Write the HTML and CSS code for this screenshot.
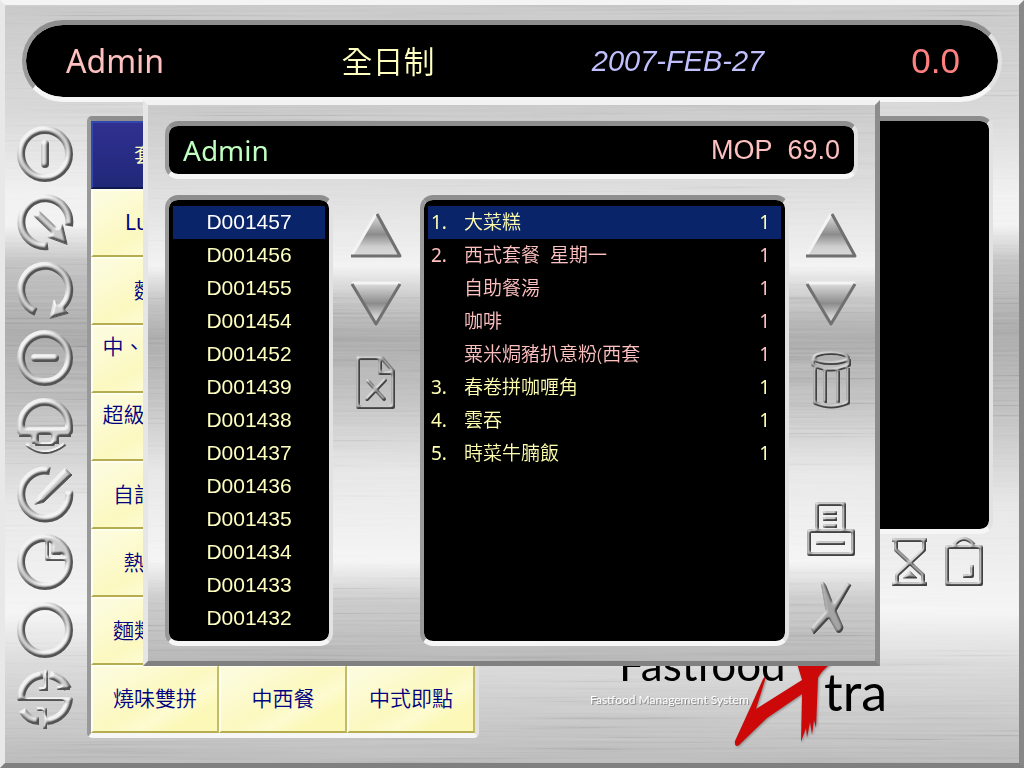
FILE: index.html
```html
<!DOCTYPE html>
<html lang="zh-Hant">
<head>
<meta charset="utf-8">
<title>Fastfood Xtra</title>
<link rel="stylesheet" href="styles.css">
</head>
<body>
<div class="page">
  <svg class="brushed" aria-hidden="true">
    <defs>
      <filter id="grain" x="0" y="0" width="100%" height="100%">
        <feTurbulence type="fractalNoise" baseFrequency="0.004 0.4" numOctaves="3" seed="4"/>
        <feColorMatrix values="1.6 0 0 0 -0.3  1.6 0 0 0 -0.3  1.6 0 0 0 -0.3  0 0 0 0 1"/>
      </filter>
      <filter id="emboss" filterUnits="userSpaceOnUse" x="-4" y="-4" width="66" height="68" color-interpolation-filters="sRGB">
        <feGaussianBlur in="SourceAlpha" stdDeviation="1.4" result="soft"/>
        <feDiffuseLighting in="soft" surfaceScale="5" diffuseConstant="1.15" lighting-color="#ffffff" result="lit">
          <feDistantLight azimuth="235" elevation="42"/>
        </feDiffuseLighting>
        <feComponentTransfer in="lit" result="toned">
          <feFuncR type="linear" slope="0.62" intercept="0.33"/>
          <feFuncG type="linear" slope="0.62" intercept="0.33"/>
          <feFuncB type="linear" slope="0.62" intercept="0.33"/>
        </feComponentTransfer>
        <feComposite in="toned" in2="SourceAlpha" operator="in"/>
      </filter>
      <filter id="emboss-fine" filterUnits="userSpaceOnUse" x="-4" y="-4" width="66" height="68" color-interpolation-filters="sRGB">
        <feGaussianBlur in="SourceAlpha" stdDeviation="0.8" result="soft"/>
        <feDiffuseLighting in="soft" surfaceScale="3" diffuseConstant="1" lighting-color="#ffffff" result="lit">
          <feDistantLight azimuth="235" elevation="40"/>
        </feDiffuseLighting>
        <feComponentTransfer in="lit" result="toned">
          <feFuncR type="linear" slope="0.6" intercept="0.26"/>
          <feFuncG type="linear" slope="0.6" intercept="0.26"/>
          <feFuncB type="linear" slope="0.6" intercept="0.26"/>
        </feComponentTransfer>
        <feComposite in="toned" in2="SourceAlpha" operator="in"/>
      </filter>
      <linearGradient id="steel" x1="0" y1="0" x2="0" y2="1">
        <stop offset="0" stop-color="#dedede"/><stop offset="0.5" stop-color="#8c8c8c"/><stop offset="0.8" stop-color="#cfcfcf"/><stop offset="1" stop-color="#d8d8d8"/>
      </linearGradient>
    </defs>
    <rect width="100%" height="100%" filter="url(#grain)"/>
  </svg>

  <header class="topbar well">
    <span class="user">Admin</span>
    <span class="period">全日制</span>
    <time class="date" datetime="2007-02-27">2007-FEB-27</time>
    <span class="total">0.0</span>
  </header>

  <main class="workspace">
    <nav class="rail" aria-label="Functions">
      <button class="icon" aria-label="Power"><svg viewBox="0 0 56 56"><g><circle cx="28" cy="28" r="24"/><path d="M28 18V38"/></g></svg></button>
      <button class="icon" aria-label="Exit"><svg viewBox="0 0 56 56"><g><path d="M52 32A24 24 0 1 0 31 52" stroke-linecap="butt"/><path d="M19 19L41 40" stroke-linecap="butt"/><path class="solid" d="M50 50L45 29L31 43Z"/></g></svg></button>
      <button class="icon" aria-label="Redo"><svg viewBox="0 0 56 56"><g><path d="M19 50A24 24 0 1 1 45 45" stroke-linecap="butt"/><path class="solid" d="M33 56L37 38L51 51Z"/></g></svg></button>
      <button class="icon" aria-label="Remove"><svg viewBox="0 0 56 56"><g><circle cx="28" cy="28" r="24"/><path d="M18 28H38"/></g></svg></button>
      <button class="icon" aria-label="Meal"><svg viewBox="0 0 56 56"><g><path d="M4 33V28A24 24 0 0 1 52 28V33Z"/><path class="thin" d="M2 37H16V46M54 37H40V46M20 46H36V37M20 37V48"/><path class="thin" d="M9 46Q28 62 48 46"/></g></svg></button>
      <button class="icon" aria-label="Edit"><svg viewBox="0 0 56 56"><g><path d="M33 5A24 24 0 1 0 52 25" stroke-linecap="butt"/><path class="solid" d="M18 38L22 29L48 2L55 9L27 36Z"/></g></svg></button>
      <button class="icon" aria-label="Split"><svg viewBox="0 0 56 56"><g><circle cx="28" cy="28" r="24"/><path class="thin" d="M30 3V25H53L31 4M36 12V19H43Z"/></g></svg></button>
      <button class="icon" aria-label="Blank"><svg viewBox="0 0 56 56"><g><circle cx="28" cy="28" r="24"/></g></svg></button>
      <button class="icon" aria-label="Payment"><svg viewBox="0 0 56 56"><g><path stroke-linecap="butt" d="M4 30A24 24 0 0 1 26 5M52 28A24 24 0 0 1 30 51M33 5Q46 8 51 19M5 40Q12 51 22 51"/><path class="thin" d="M1 29H55M29 0V19M22 19H31M40 18H53M28 38V59M20 39H28"/></g></svg></button>
    </nav>

    <div class="menu well">
      <button class="tile tile-on">套餐</button>
      <button class="tile latin">Lunch</button>
      <button class="tile">麵食</button>
      <button class="tile">中、西式飯類</button>
      <button class="tile">超級無敵套餐</button>
      <button class="tile">自訂套餐</button>
      <button class="tile">熱飲品</button>
      <button class="tile">麵類雙拼</button>
      <button class="tile">燒味雙拼</button>
      <button class="tile">中西餐</button>
      <button class="tile">中式即點</button>
    </div>

    <section class="side">
      <div class="bill well"></div>
      <div class="tools">
        <button class="icon line" aria-label="Hold order"><svg width="40" height="50" viewBox="0 0 40 50"><g><path d="M2 3H37M2 47H37M6 4V13L33 38V46M34 4V13L7 38V46"/><path class="solid" d="M13 41L20 34L27 41Z"/></g></svg></button>
        <button class="icon line" aria-label="Take away"><svg width="40" height="50" viewBox="0 0 40 50"><g><path d="M3 10H37V47H3ZM10 8Q20 -4 30 8M28 28V39H19"/></g></svg></button>
      </div>
      <svg class="brand" width="310" height="125" viewBox="0 0 310 125" role="img" aria-label="Fastfood Xtra">
        <path class="brand-red" d="M213 30H252Q237 42 235 48L233 98L231 90L229 105L227 92L224 108L223 98L218 112L219 64L184 88L156 115Q151 118 152 111L168 76L180 49Q184 44 182 50L173 79L219 50Z"/>
        <text class="brand-name" x="36" y="51">Fastfood</text>
        <text class="brand-tail" x="241" y="81">tra</text>
        <text class="brand-note" x="7" y="74">Fastfood Management System</text>
      </svg>
    </section>
  </main>

  <section class="dialog" role="dialog" aria-label="Orders">
    <svg class="brushed" aria-hidden="true"><rect width="100%" height="100%" filter="url(#grain)"/></svg>
    <div class="summary well"><span>Admin</span><span class="amount">MOP&nbsp; 69.0</span></div>
    <div class="columns">
      <div class="orders well">
        <button class="order order-on">D001457</button>
        <button class="order">D001456</button>
        <button class="order">D001455</button>
        <button class="order">D001454</button>
        <button class="order">D001452</button>
        <button class="order">D001439</button>
        <button class="order">D001438</button>
        <button class="order">D001437</button>
        <button class="order">D001436</button>
        <button class="order">D001435</button>
        <button class="order">D001434</button>
        <button class="order">D001433</button>
        <button class="order">D001432</button>
      </div>
      <div class="controls">
        <button class="icon arrow" aria-label="Previous order"><svg width="52" height="46" viewBox="0 0 52 46"><path d="M26 2L50 43H2Z" fill="url(#steel)"/><path class="lit" d="M26 2L2 43"/><path class="dim" d="M27 2L50 44H1"/></svg></button>
        <button class="icon arrow" aria-label="Next order"><svg width="52" height="46" viewBox="0 0 52 46"><path d="M2 2H50L26 43Z" fill="url(#steel)"/><path class="lit" d="M2 2H50"/><path class="dim" d="M2 3L26 43L50 3"/></svg></button>
        <button class="icon line cancel" aria-label="Void order"><svg width="42" height="54" viewBox="0 0 42 54"><g><path d="M3 2H27L38 15V51H3ZM25 4V17H36"/><path class="cross" d="M13 25L29 43M30 24L12 43"/></g></svg></button>
      </div>
      <div class="detail well">
        <table class="items">
          <tr class="item-on"><td class="no">1.</td><td>大菜糕</td><td class="qty">1</td></tr>
          <tr class="set"><td class="no">2.</td><td>西式套餐&nbsp; 星期一</td><td class="qty">1</td></tr>
          <tr class="set"><td class="no"></td><td>自助餐湯</td><td class="qty">1</td></tr>
          <tr class="set"><td class="no"></td><td>咖啡</td><td class="qty">1</td></tr>
          <tr class="set"><td class="no"></td><td>粟米焗豬扒意粉(西套</td><td class="qty">1</td></tr>
          <tr><td class="no">3.</td><td>春卷拼咖喱角</td><td class="qty">1</td></tr>
          <tr><td class="no">4.</td><td>雲吞</td><td class="qty">1</td></tr>
          <tr><td class="no">5.</td><td>時菜牛腩飯</td><td class="qty">1</td></tr>
        </table>
      </div>
      <div class="controls">
        <button class="icon arrow" aria-label="Previous item"><svg width="52" height="46" viewBox="0 0 52 46"><path d="M26 2L50 43H2Z" fill="url(#steel)"/><path class="lit" d="M26 2L2 43"/><path class="dim" d="M27 2L50 44H1"/></svg></button>
        <button class="icon arrow" aria-label="Next item"><svg width="52" height="46" viewBox="0 0 52 46"><path d="M2 2H50L26 43Z" fill="url(#steel)"/><path class="lit" d="M2 2H50"/><path class="dim" d="M2 3L26 43L50 3"/></svg></button>
        <button class="icon line" aria-label="Delete item"><svg width="42" height="60" viewBox="0 0 42 60"><g><ellipse cx="21" cy="8" rx="17" ry="5"/><path d="M3 9V15Q21 24 39 15V9M5 18V53Q21 60 38 53V18M15 21V53M28 21V53"/></g></svg></button>
        <button class="icon line print" aria-label="Print"><svg width="50" height="56" viewBox="0 0 50 56"><g><path d="M11 29V3H38V29M3 30H47V53H3ZM17 12H31M17 18H31M17 25H31M10 42H39"/></g></svg></button>
        <button class="icon line" aria-label="Close"><svg width="44" height="56" viewBox="0 0 44 56"><g><path class="solid" d="M12 2Q15 1 17 6L24 24L38 3L42 5L27 31L34 47Q33 54 28 52L20 38L5 54L2 48L17 31Z"/></g></svg></button>
      </div>
    </div>
  </section>
</div>
</body>
</html>
```
FILE: styles.css
```css
* { box-sizing: border-box; }

body {
  margin: 0;
  font-family: "Noto Sans", "Noto Sans CJK TC", sans-serif;
}

button {
  margin: 0;
  padding: 0;
  border: 0;
  background: none;
  font: inherit;
  color: inherit;
  cursor: pointer;
}

.page {
  position: relative;
  display: flex;
  flex-direction: column;
  gap: 14px;
  min-height: 100vh;
  padding: 15px 0 8px;
  border: 5px solid;
  border-color: #f4f4f4 #888 #808080 #e8e8e8;
  background: linear-gradient(#c6c6c6, #d6d6d6 14%, #f0f0f0 25%, #f2f2f2 29%, #c0c0c0 34%, #a8a8a8 43%, #bcbcbc 53%, #e6e6e6 66%, #f4f4f4 80%, #d8d8d8 87%, #b8b8b8);
}

.brushed {
  position: absolute;
  inset: 0;
  width: 100%;
  height: 100%;
  opacity: 0.3;
  mix-blend-mode: soft-light;
  pointer-events: none;
}

.well {
  border: 5px solid;
  border-color: #8e8e8e #e2e2e2 #f6f6f6 #999;
  border-left-width: 4px;
  border-right-width: 4px;
  border-radius: 13px;
  background: #000;
  background-clip: padding-box;
}

.topbar {
  position: relative;
  display: grid;
  grid-template-columns: 177fr 290fr 290fr 137fr;
  align-items: center;
  height: 82px;
  margin: 0 17px;
  padding: 0 38px 0 40px;
  border-radius: 41px;
  text-align: center;
  font-size: 32px;
  line-height: 40px;
}

.user { text-align: left; color: #ffc0c0; }
.period { font-size: 31px; font-weight: 350; color: #ffffc0; }
.date { font-family: "Liberation Sans", sans-serif; font-size: 29px; font-style: italic; color: #c0c0ff; }
.total { text-align: right; font-family: "Liberation Sans", sans-serif; font-size: 35px; color: #ff8080; }

.workspace {
  position: relative;
  display: flex;
  align-items: flex-start;
  padding: 0 26px 0 12px;
}

.rail {
  display: grid;
  grid-auto-rows: 68px;
  width: 56px;
  margin-right: 14px;
  padding-top: 4px;
}

.icon { display: grid; place-items: center; }
.icon svg {
  fill: none;
  stroke: #a8a8a8;
  overflow: visible;
  stroke-linejoin: round;
}
.rail svg {
  width: 56px;
  height: 56px;
  stroke-width: 8;
  stroke-linecap: round;
}
.rail g { filter: url(#emboss); }
.rail .thin { stroke-width: 4; stroke-linecap: butt; }
.icon .solid { fill: #b0b0b0; stroke-width: 1; }
.line svg { stroke-width: 4; }
.line g { filter: url(#emboss-fine); }
.line .cross { stroke-linecap: round; }
.arrow svg { stroke: none; }
.arrow .lit { stroke: #f4f4f4; stroke-width: 3; }
.arrow .dim { stroke: #707070; stroke-width: 3; }

.menu {
  display: grid;
  grid-template-columns: repeat(3, 128px);
  grid-auto-rows: 68px;
  border-radius: 5px;
}

.tile {
  grid-column: 1;
  padding: 0 8px 2px;
  border: 2px solid;
  border-color: #fffff0 #c4bd68 #b5ad50 #fffff0;
  background: linear-gradient(150deg, #fcfcdc 10%, #fcf8c0 50%, #fdfbd0 65%, #fcf8b8 80%);
  font-size: 21px;
  font-weight: 350;
  line-height: 24px;
  color: #000080;
}
.tile:nth-child(n + 9) { grid-row: 9; grid-column: auto; }
.latin { font-weight: 400; }
.tile-on {
  border-color: #3048b0 #182060 #101850 #3048b0;
  background: linear-gradient(#303090, #202878);
  color: #ffffc0;
}

.side {
  display: flex;
  flex: 1;
  flex-direction: column;
  margin-left: 12px;
}
.bill { height: 418px; }
.tools {
  display: flex;
  justify-content: flex-end;
  gap: 14px;
  margin-top: 3px;
  padding-right: 9px;
}
.brand {
  align-self: flex-end;
  margin: 43px 100px 0 0;
  font-family: Lato, sans-serif;
}
.brand-name { font-size: 44px; }
.brand-tail { font-size: 52px; }
.brand-note { font-size: 12px; fill: #fff; filter: drop-shadow(1px 1px 0 #888); }
.brand-red { fill: #cc0808; filter: drop-shadow(1px 1px 1px #888); }

.dialog {
  position: absolute;
  inset: 95px 139px 97px 138px;
  display: flex;
  flex-direction: column;
  gap: 16px;
  padding: 16px 17px 15px;
  border: 5px solid;
  border-color: #f2f2f2 #8c8c8c #808080 #e6e6e6;
  background: linear-gradient(#c6c6c6, #dadada 14%, #f2f2f2 29%, #c4c4c4 35%, #a8a8a8 42%, #c0c0c0 53%, #e6e6e6 66%, #f4f4f4 82%, #c8c8c8 89%, #b4b4b4);
}

.summary {
  position: relative;
  display: flex;
  justify-content: space-between;
  align-items: center;
  height: 58px;
  padding: 0 14px;
  font-size: 28px;
  line-height: 34px;
  color: #c0ffc0;
}
.amount { font-family: "Liberation Sans", sans-serif; font-size: 27px; color: #ffc0c0; }

.columns {
  position: relative;
  display: grid;
  grid-template-columns: 168px 87px minmax(0, 1fr) 86px;
  flex: 1;
  margin-right: -17px;
}

.orders { display: flex; flex-direction: column; padding: 6px 4px; }
.order {
  height: 33px;
  padding: 0 0 2px;
  font-family: "Liberation Sans", sans-serif;
  font-size: 21px;
  color: #ffffc0;
}
.order-on { background: #0a246a; color: #fff; }

.controls {
  display: flex;
  flex-direction: column;
  align-items: center;
  gap: 23px;
  padding: 17px 2px 0 0;
}
.cancel { margin-top: 6px; }
.print { margin-top: 68px; }

.detail { padding: 6px 4px; }
.items {
  width: 100%;
  border-collapse: collapse;
  font-size: 19px;
  font-weight: 350;
  line-height: 33px;
  color: #ffffb0;
}
.items td { height: 33px; padding: 0; }
.items .no { width: 36px; padding-left: 3px; font-weight: 400; }
.items .qty { width: 40px; padding-right: 11px; font-weight: 400; text-align: right; }
.set { color: #ffc0c0; }
.item-on { background: #0a246a; }
```
